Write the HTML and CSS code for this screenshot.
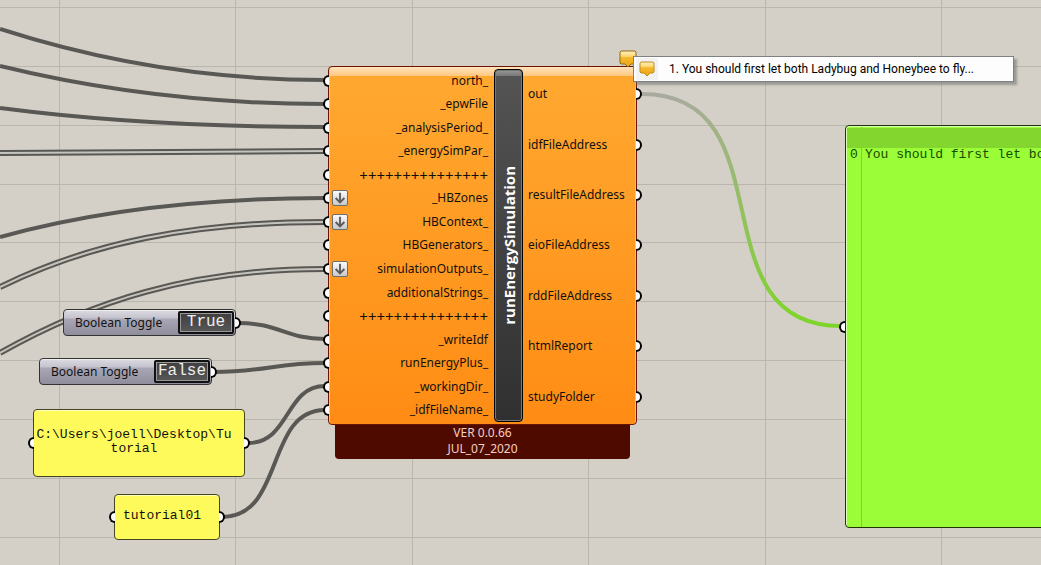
FILE: index.html
```html
<!DOCTYPE html>
<html lang="en">
<head>
<meta charset="utf-8">
<title>Definition canvas</title>
<link rel="stylesheet" href="styles.css">
</head>
<body>
<main class="canvas">
  <svg class="wires" aria-hidden="true">
    <defs>
      <linearGradient id="fade" gradientUnits="userSpaceOnUse" x1="680" y1="93" x2="760" y2="326">
        <stop offset="0" stop-color="#a9aa9d"/>
        <stop offset="1" stop-color="#7fd42c"/>
      </linearGradient>
      <g id="arrow">
        <path d="M8 2v11M3 8l5 5 5-5" fill="none" stroke="#5c5c5c" stroke-width="2.2"/>
      </g>
      <linearGradient id="gold" x1="0" y1="0" x2="0" y2="1">
        <stop offset="0" stop-color="#fff3c4"/>
        <stop offset="0.35" stop-color="#fbd36a"/>
        <stop offset="0.4" stop-color="#f5b92c"/>
        <stop offset="1" stop-color="#eda413"/>
      </linearGradient>
    </defs>
    <path class="grid" d="M59 0V2000M235 0V2000M412 0V2000M588 0V2000M765 0V2000M941 0V2000M0 7H4000M0 66H4000M0 125H4000M0 184H4000M0 242H4000M0 301H4000M0 360H4000M0 419H4000M0 478H4000M0 537H4000"/>
    <g class="wire">
      <path d="M0 29C90 58 200 80 325 80"/>
      <path d="M0 66C90 88 200 104 325 104"/>
      <path d="M0 108C100 121 210 127 325 127"/>
      <path d="M0 237C90 212 200 198 325 198"/>
      <path d="M238 323C280 323 285 339 325 339"/>
      <path d="M214 372C265 372 275 363 325 363"/>
      <path d="M248 443C290 443 285 386 325 386"/>
      <path d="M222 517C285 517 265 410 325 410"/>
    </g>
    <g class="wire-list">
      <path d="M0 153C100 152 210 151 325 151"/>
      <path d="M0 287C90 243 190 222 325 222"/>
      <path d="M0 353C90 302 190 269 325 269"/>
    </g>
    <g class="wire-list-core">
      <path d="M0 153C100 152 210 151 325 151"/>
      <path d="M0 287C90 243 190 222 325 222"/>
      <path d="M0 353C90 302 190 269 325 269"/>
    </g>
    <path class="wire-out" d="M642 94C790 94 694 326 841 326"/>
  </svg>

  <section class="component">
    <div class="body">
      <ul class="inputs">
        <li class="port-in">north_</li>
        <li class="port-in">_epwFile</li>
        <li class="port-in">_analysisPeriod_</li>
        <li class="port-in">_energySimPar_</li>
        <li class="port-in plus">+++++++++++++++</li>
        <li class="port-in"><svg class="flatten" viewBox="0 0 16 16"><use href="#arrow"/></svg>_HBZones</li>
        <li class="port-in"><svg class="flatten" viewBox="0 0 16 16"><use href="#arrow"/></svg>HBContext_</li>
        <li class="port-in">HBGenerators_</li>
        <li class="port-in"><svg class="flatten" viewBox="0 0 16 16"><use href="#arrow"/></svg>simulationOutputs_</li>
        <li class="port-in">additionalStrings_</li>
        <li class="port-in plus">+++++++++++++++</li>
        <li class="port-in">_writeIdf</li>
        <li class="port-in">runEnergyPlus_</li>
        <li class="port-in">_workingDir_</li>
        <li class="port-in">_idfFileName_</li>
      </ul>
      <h1 class="name"><span>runEnergySimulation</span></h1>
      <ul class="outputs">
        <li class="port-out">out</li>
        <li class="port-out">idfFileAddress</li>
        <li class="port-out">resultFileAddress</li>
        <li class="port-out">eioFileAddress</li>
        <li class="port-out">rddFileAddress</li>
        <li class="port-out">htmlReport</li>
        <li class="port-out">studyFolder</li>
      </ul>
    </div>
    <footer class="version">VER 0.0.66<br>JUL_07_2020</footer>
  </section>

  <div class="toggle toggle-write port-out">
    <label for="write">Boolean Toggle</label>
    <button id="write" type="button">True</button>
  </div>
  <div class="toggle toggle-run port-out">
    <label for="run">Boolean Toggle</label>
    <button id="run" type="button">False</button>
  </div>

  <div class="panel panel-path port-in port-out"><p>C:\Users\joell\Desktop\Tutorial</p></div>
  <div class="panel panel-name port-in port-out"><p>tutorial01</p></div>

  <section class="output port-in">
    <div class="output-view">
      <div class="output-head"></div>
      <div class="output-row"><span class="index">0</span><span class="line">You should first let both</span></div>
    </div>
  </section>

  <svg class="balloon" viewBox="0 0 18 18" aria-hidden="true"><path d="M2 1h14l1 1v11l-1 1h-4l-3 3-3-3H2l-1-1V2z" fill="url(#gold)" stroke="#8f6a10"/></svg>
  <div class="remark" role="tooltip">
    <span class="remark-icon"><svg viewBox="0 0 18 18" aria-hidden="true"><path d="M3 2h12l1 1v9l-1 1h-3l-3 3-3-3H3l-1-1V3z" fill="url(#gold)" stroke="#c08c1c"/></svg></span>
    <span>1. You should first let both Ladybug and Honeybee to fly...</span>
  </div>
</main>
</body>
</html>
```
FILE: styles.css
```css
*, *::before, *::after { box-sizing: border-box; }

body {
  margin: 0;
  font-family: "Noto Sans", "Open Sans", sans-serif;
  font-size: 12px;
  color: #111;
}

ul, p, h1 { margin: 0; padding: 0; list-style: none; }

.canvas {
  position: relative;
  height: 100vh;
  overflow: hidden;
  background: #d4d0c8;
}

.wires { position: absolute; width: 100%; height: 100%; }
.wires path { fill: none; }
.wires .grid { stroke: #b9b6ae; stroke-width: 1; shape-rendering: crispEdges; }
.wire { stroke: #595854; stroke-width: 4; }
.wire-list { stroke: #595854; stroke-width: 6; }
.wire-list-core { stroke: #c6c3bc; stroke-width: 2; }
.wire-out { stroke: url(#fade); stroke-width: 4; }

/* connection grips */
.port-in, .port-out { position: relative; }
.port-in::before, .port-out::after {
  content: "";
  position: absolute;
  top: calc(50% - 6px);
  width: 6px;
  height: 12px;
  border: 2px solid #000;
  background: #fff;
}
.port-in::before { left: -6px; border-right: 0; border-radius: 6px 0 0 6px; }
.port-out::after { right: -6px; border-left: 0; border-radius: 0 6px 6px 0; }

/* component */
.component { position: absolute; left: 328px; top: 66px; width: 309px; }
.body {
  display: grid;
  grid-template-columns: 1fr 29px 113px;
  height: 359px;
  padding: 2px 0;
  border: 1px solid #6a1408;
  border-radius: 4px;
  background:
    linear-gradient(#ffe3bd, #ffc77f) 0 0 / 100% 9px no-repeat,
    linear-gradient(#ffa931, #ff8c14);
  box-shadow: inset 1px 0 #ffc070, inset -1px 0 #ffc070;
}
.inputs, .outputs { display: grid; grid-auto-rows: 1fr; line-height: 18px; }
.inputs li { display: flex; align-items: center; justify-content: flex-end; padding-right: 6px; }
.inputs .plus { font-size: 15px; }
.outputs li { display: flex; align-items: center; padding-left: 5px; }
.flatten {
  width: 16px;
  height: 16px;
  margin-left: 3px;
  margin-right: auto;
  border: 1px solid #6d6d6d;
  border-radius: 2px;
  background: linear-gradient(#fafafa, #c9c9c9);
}
.name {
  display: flex;
  align-items: center;
  justify-content: center;
  border: 1px solid #000;
  border-radius: 4px;
  background: linear-gradient(#999, #777) 0 0 / 100% 6px no-repeat, linear-gradient(#545454, #303030);
  box-shadow: inset 0 0 0 1px #777;
  color: #fff;
  font-family: "Open Sans", "Noto Sans", sans-serif;
  font-size: 15px;
  line-height: 20px;
}
.name span { writing-mode: vertical-rl; rotate: 180deg; }
.version {
  margin: 0 7px;
  padding-bottom: 2px;
  border-radius: 0 0 4px 4px;
  background: #4f0a00;
  color: #f5cfc5;
  line-height: 16px;
  text-align: center;
}

/* toggles */
.toggle {
  position: absolute;
  display: flex;
  align-items: center;
  justify-content: space-between;
  width: 173px;
  height: 27px;
  padding: 0 1px 0 11px;
  border: 1px solid #333;
  border-radius: 4px;
  background: linear-gradient(#dcdbe2, #c4c3ce 8px, #a9a7b6 9px, #8f8d9c);
  box-shadow: inset 0 1px #eee;
}
.toggle-write { left: 63px; top: 309px; }
.toggle-run { left: 39px; top: 358px; }
.toggle button {
  width: 56px;
  height: 23px;
  padding: 0 0 2px;
  border: 2px solid #111;
  border-radius: 2px;
  background: linear-gradient(#3f3f3f, #575757);
  box-shadow: inset 0 0 0 1px #999;
  color: #eee;
  font-family: "Liberation Mono", monospace;
  font-size: 16px;
  line-height: 16px;
}

/* panels */
.panel {
  position: absolute;
  display: flex;
  align-items: center;
  justify-content: center;
  border: 1px solid #45451f;
  border-radius: 4px;
  background: #fffa5b;
  box-shadow: inset 0 1px #ffffc0;
  font-family: "Liberation Mono", monospace;
  font-size: 13px;
  line-height: 14px;
  text-align: center;
  word-break: break-all;
}
.panel-path { left: 33px; top: 409px; width: 212px; height: 68px; padding: 0 12px 2px 2px; }
.panel-name { left: 114px; top: 494px; width: 106px; height: 46px; padding: 0 10px 2px 0; }

.output { position: absolute; left: 845px; right: -8px; top: 125px; height: 403px; }
.output-view {
  height: 100%;
  border: 1px solid #23330f;
  border-radius: 4px;
  background: linear-gradient(#7bd42d, #7bd42d) 15px 0 / 1px 100% no-repeat, #9afd37;
  box-shadow: inset 1px 1px #d9ffb0;
  overflow: hidden;
}
.output-head { height: 20px; margin: 2px 0 0 1px; background: #82d62e; }
.output-row {
  display: flex;
  color: #174a00;
  font-family: "Liberation Mono", monospace;
  font-size: 13px;
  line-height: 14px;
  white-space: nowrap;
}
.index { width: 19px; padding-left: 4px; flex: none; }

/* remark */
.balloon { position: absolute; left: 619px; top: 50px; width: 18px; height: 18px; }
.remark {
  position: absolute;
  left: 633px;
  top: 56px;
  display: flex;
  align-items: center;
  gap: 11px;
  width: 381px;
  height: 26px;
  padding-left: 2px;
  border: 1px solid #808080;
  background: #fdfdfd;
  box-shadow: 3px 3px 2px #77777799;
  color: #000;
  font-family: Roboto, "Open Sans", sans-serif;
  white-space: nowrap;
}
.remark-icon { display: flex; width: 22px; height: 22px; padding: 2px; background: #f2f2f2; }
.remark-icon svg { width: 18px; height: 18px; }
```
